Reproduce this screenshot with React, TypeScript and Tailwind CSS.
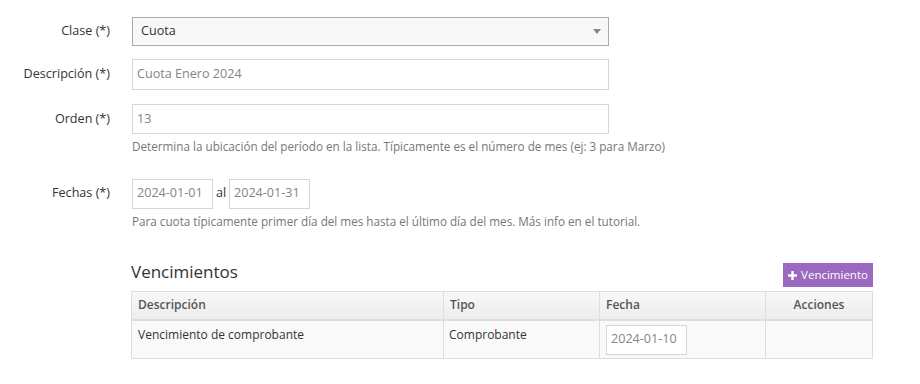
export default function App() {
  return (
    <div className="h-[384px] w-[920px] overflow-hidden bg-white font-['Open_Sans',sans-serif] text-[12.6px] text-[#333]">
      <div className="pt-[17px]">
        <div className="flex items-center">
          <label className="w-[110px] text-right">Clase (*)</label>
          <div className="ml-[22px] flex h-[29px] w-[477px] items-center justify-between border border-[#aaa] bg-[#f8f8f8] pl-[8px] pr-[6px]">
            <span>Cuota</span>
            <span className="mr-[1px] h-0 w-0 border-x-[4px] border-t-[5px] border-x-transparent border-t-[#888]" />
          </div>
        </div>

        <div className="mt-[13px] flex items-center">
          <label className="w-[110px] text-right">Descripción (*)</label>
          <div className="ml-[22px] flex h-[31px] w-[477px] items-center border border-[#d5d5d5] px-[4px] text-[#858585]">
            Cuota Enero 2024
          </div>
        </div>

        <div className="mt-[14px] flex items-center">
          <label className="w-[110px] text-right">Orden (*)</label>
          <div className="ml-[22px] flex h-[30px] w-[477px] items-center border border-[#d5d5d5] px-[4px] text-[#858585]">
            13
          </div>
        </div>
        <p className="ml-[132px] mt-[4px] text-[11.7px] text-[#777]">
          Determina la ubicación del período en la lista. Típicamente es el número de mes (ej: 3 para Marzo)
        </p>

        <div className="mt-[23px] flex items-center">
          <label className="w-[110px] text-right">Fechas (*)</label>
          <div className="ml-[22px] flex items-center">
            <div className="flex h-[30px] w-[81px] items-center border border-[#d5d5d5] px-[4px] text-[#858585]">
              2024-01-01
            </div>
            <span className="ml-[3px] mr-[3px] w-[10px] text-[#333]">al</span>
            <div className="flex h-[30px] w-[81px] items-center border border-[#d5d5d5] px-[4px] text-[#858585]">
              2024-01-31
            </div>
          </div>
        </div>
        <p className="ml-[132px] mt-[4px] text-[11.7px] text-[#777]">
          Para cuota típicamente primer día del mes hasta el último día del mes. Más info en el tutorial.
        </p>

        <div className="ml-[131px] mt-[32px] w-[742px]">
          <div className="flex items-end justify-between">
            <h3 className="mb-[9px] text-[17px] leading-[20px] text-[#333]">Vencimientos</h3>
            <button className="mb-[4px] flex h-[24px] w-[90px] items-center justify-center gap-[4px] bg-[#9b69bf] text-[11.5px] text-white">
              <svg width="9" height="9" viewBox="0 0 10 10" fill="white">
                <rect x="3.7" y="0" width="2.6" height="10" />
                <rect x="0" y="3.7" width="10" height="2.6" />
              </svg>
              Vencimiento
            </button>
          </div>
          <table className="w-full border-collapse border border-[#ddd] text-[12px]">
            <thead>
              <tr className="h-[28px] bg-gradient-to-b from-[#f8f8f8] to-[#ececec] text-left font-semibold text-[#555]">
                <th className="w-[312px] border-b-2 border-r border-[#ddd] px-[6px] font-semibold">Descripción</th>
                <th className="w-[156px] border-b-2 border-r border-[#ddd] px-[6px] font-semibold">Tipo</th>
                <th className="w-[166px] border-b-2 border-r border-[#ddd] px-[6px] font-semibold">Fecha</th>
                <th className="border-b-2 border-[#ddd] px-[6px] text-center font-semibold">Acciones</th>
              </tr>
            </thead>
            <tbody>
              <tr className="h-[39px] bg-[#f9f9f9] align-top">
                <td className="border-r border-[#ddd] px-[6px] pt-[5px]">Vencimiento de comprobante</td>
                <td className="border-r border-[#ddd] px-[5px] pt-[5px]">Comprobante</td>
                <td className="border-r border-[#ddd] px-[6px] pt-[4px]">
                  <div className="flex h-[30px] w-[81px] items-center border border-[#d5d5d5] bg-white px-[4px] text-[12.6px] text-[#858585]">
                    2024-01-10
                  </div>
                </td>
                <td />
              </tr>
            </tbody>
          </table>
        </div>
      </div>
    </div>
  );
}
